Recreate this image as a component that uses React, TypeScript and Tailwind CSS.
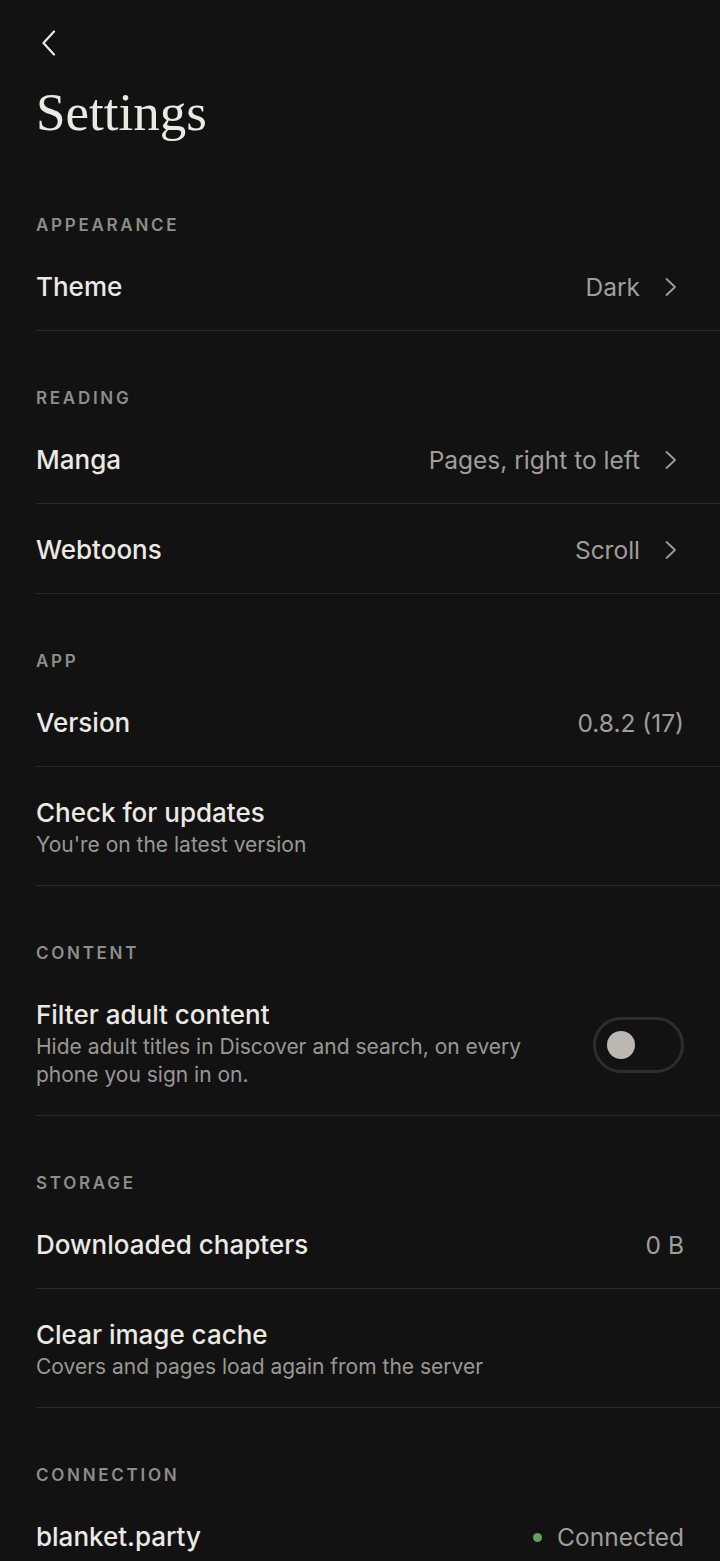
import React from "react";

const SANS = "font-['Inter','Liberation_Sans',sans-serif]";

function Chevron() {
  return (
    <svg width="14" height="20" viewBox="0 0 14 20" fill="none" className="shrink-0">
      <path
        d="M2.5 2 L11 10 L2.5 18"
        stroke="#a09e99"
        strokeWidth="1.8"
        strokeLinecap="round"
        strokeLinejoin="round"
      />
    </svg>
  );
}

function SectionHeader({ label, first }: { label: string; first?: boolean }) {
  return (
    <div
      className={`${first ? "mt-[73px]" : "mt-[57px]"} mb-[6px] px-[36px] text-[17px] leading-[20px] font-semibold tracking-[0.16em] text-[#8f8d88]`}
    >
      {label}
    </div>
  );
}

function Row({
  title,
  subtitle,
  value,
  chevron,
  right,
  last,
}: {
  title: string;
  subtitle?: string;
  value?: string;
  chevron?: boolean;
  right?: React.ReactNode;
  last?: boolean;
}) {
  return (
    <div className="ml-[36px]">
      <div
        className={`flex items-center justify-between pr-[36px] ${
          subtitle ? "pt-[31px] pb-[26px]" : "h-[89px] pt-[3px]"
        }`}
      >
        <div className="min-w-0">
          <div className="text-[26px] leading-[30px] font-medium text-[#ece9e3]">
            {title}
          </div>
          {subtitle && (
            <div className="mt-[3px] max-w-[520px] text-[21px] leading-[28px] text-[#9a9893]">
              {subtitle}
            </div>
          )}
        </div>
        {right}
        {value && (
          <div className="flex items-center gap-[24px] shrink-0">
            <span className="text-[24.5px] text-[#a09e99]">{value}</span>
            {chevron && (
              <span className="mr-[6px]">
                <Chevron />
              </span>
            )}
          </div>
        )}
      </div>
      {!last && <div className="h-px bg-[#2a2a2a]" />}
    </div>
  );
}

function Toggle() {
  return (
    <div className="shrink-0 w-[91px] h-[56px] rounded-full border-[3px] border-[#2d2d2d] flex items-center pl-[11px]">
      <div className="w-[28px] h-[28px] rounded-full bg-[#bcb8b1]" />
    </div>
  );
}

export default function App() {
  return (
    <div className={`min-h-[1561px] w-full bg-[#121212] ${SANS} overflow-hidden`}>
      <div className="px-[36px]">
        <button aria-label="Back" className="mt-[30px] block h-[24px] ml-[5px]">
          <svg width="16" height="26" viewBox="0 0 16 26" fill="none">
            <path
              d="M13 1.5 L2.5 13 L13 24.5"
              stroke="#ece9e3"
              strokeWidth="2.2"
              strokeLinecap="round"
              strokeLinejoin="round"
            />
          </svg>
        </button>
        <h1 className="mt-[28px] font-['Liberation_Serif',serif] text-[53px] leading-[60px] text-[#ece9e3]">
          Settings
        </h1>
      </div>

      <SectionHeader label="APPEARANCE" first />
      <Row title="Theme" value="Dark" chevron />

      <SectionHeader label="READING" />
      <Row title="Manga" value="Pages, right to left" chevron />
      <Row title="Webtoons" value="Scroll" chevron />

      <SectionHeader label="APP" />
      <Row title="Version" value="0.8.2 (17)" />
      <Row title="Check for updates" subtitle="You're on the latest version" />

      <SectionHeader label="CONTENT" />
      <Row
        title="Filter adult content"
        subtitle="Hide adult titles in Discover and search, on every phone you sign in on."
        right={<Toggle />}
      />

      <SectionHeader label="STORAGE" />
      <Row title="Downloaded chapters" value="0 B" />
      <Row
        title="Clear image cache"
        subtitle="Covers and pages load again from the server"
      />

      <SectionHeader label="CONNECTION" />
      <Row
        title="blanket.party"
        last
        right={
          <div className="flex items-center gap-[15px] shrink-0">
            <span className="w-[9px] h-[9px] rounded-full bg-[#6a9e5f]" />
            <span className="text-[24.5px] text-[#a09e99]">Connected</span>
          </div>
        }
      />
    </div>
  );
}
